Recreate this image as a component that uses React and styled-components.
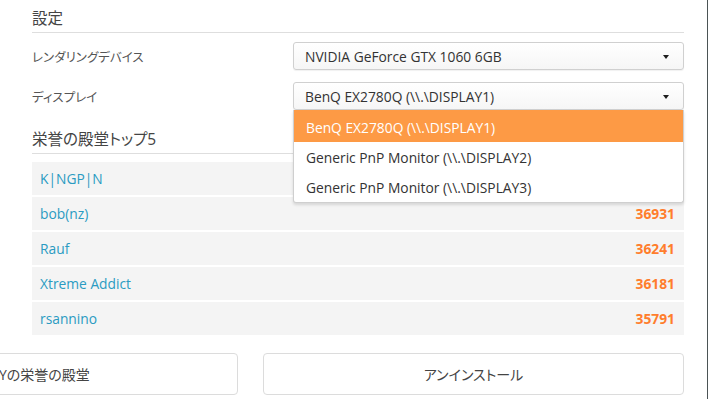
import React from "react";
import styled, { createGlobalStyle } from "styled-components";

const Global = createGlobalStyle`
  html, body { margin: 0; padding: 0; background: #fff; }
  body { font-family: "Open Sans", "Noto Sans CJK JP", sans-serif; overflow: hidden; }
  * { box-sizing: border-box; }
`;

const Page = styled.div`
  width: 708px;
  height: 399px;
  border-right: 1px solid #4b5355;
  overflow: hidden;
  background: #fff;
`;

const Content = styled.div`
  display: flex;
  flex-direction: column;
  padding: 0 23px 0 32px;
`;

const SectionTitle = styled.h2`
  margin: ${(p) => p.$top || 0}px 0 0;
  height: ${(p) => p.$h}px;
  display: flex;
  align-items: center;
  padding-top: 2px;
  border-bottom: 1px solid #dedede;
  font-size: 15.5px;
  font-weight: 400;
  color: #444;
  font-feature-settings: "palt";
`;

const FormRow = styled.div`
  display: grid;
  grid-template-columns: 261px 1fr;
  align-items: center;
  height: 28px;
  margin-top: ${(p) => p.$top}px;
`;

const Label = styled.span`
  font-size: 12.5px;
  color: #555;
  font-feature-settings: "palt";
`;

const SelectWrap = styled.div`
  position: relative;
  height: 28px;
`;

const Select = styled.div`
  height: 28px;
  display: flex;
  align-items: center;
  justify-content: space-between;
  padding: 0 14px 0 11px;
  border: 1px solid #d0d0d0;
  border-radius: 3px;
  background: linear-gradient(#ffffff, #f6f6f6);
  box-shadow: 0 1px 1px rgba(0, 0, 0, 0.06);
  font-size: 13.8px;
  color: #333;
`;

const Caret = styled.span`
  width: 0;
  height: 0;
  border-left: 3.5px solid transparent;
  border-right: 3.5px solid transparent;
  border-top: 4px solid #1e1e1e;
  margin-top: 2px;
`;

const Menu = styled.ul`
  position: absolute;
  left: 0;
  right: 0;
  top: 28px;
  margin: 0;
  padding: 0;
  list-style: none;
  background: #fff;
  border: 1px solid #cfcfcf;
  border-top: none;
  border-radius: 0 0 3px 3px;
  box-shadow: 0 2px 3px rgba(0, 0, 0, 0.12);
  z-index: 2;
`;

const MenuItem = styled.li`
  height: ${(p) => (p.$first ? 32 : 30)}px;
  padding: ${(p) => (p.$first ? "2px" : "0")} 11px 0 12px;
  display: flex;
  align-items: center;
  font-size: 13.8px;
  color: ${(p) => (p.$active ? "#fff" : "#333")};
  background: ${(p) => (p.$active ? "#fd9a45" : "transparent")};
`;

const Board = styled.div`
  display: grid;
  gap: 2px;
  margin-top: 8px;
`;

const Row = styled.div`
  height: 33px;
  display: flex;
  align-items: center;
  justify-content: space-between;
  padding: 0 9px 0 8px;
  background: #f4f4f4;
  font-size: 13.8px;
`;

const Name = styled.span`
  color: #2a9bc2;
`;

const Score = styled.span`
  color: #ff7d2c;
  font-weight: 700;
`;

const Bottom = styled.div`
  display: flex;
  gap: 25px;
  margin-top: 18px;
`;

const Button = styled.div`
  height: 42px;
  display: flex;
  align-items: center;
  justify-content: ${(p) => (p.$start ? "flex-start" : "center")};
  padding-left: ${(p) => (p.$start ? 6 : 0)}px;
  margin-left: ${(p) => p.$shift || 0}px;
  flex: ${(p) => (p.$w ? `0 0 ${p.$w}px` : "1")};
  border: 1px solid #dcdcdc;
  border-radius: 4px;
  background: #fff;
  font-size: 14px;
  color: #444;
  white-space: nowrap;
  font-feature-settings: "palt";
`;

const players = [
  ["K|NGP|N", ""],
  ["bob(nz)", "36931"],
  ["Rauf", "36241"],
  ["Xtreme Addict", "36181"],
  ["rsannino", "35791"],
];

const displays = [
  "BenQ EX2780Q (\\\\.\\DISPLAY1)",
  "Generic PnP Monitor (\\\\.\\DISPLAY2)",
  "Generic PnP Monitor (\\\\.\\DISPLAY3)",
];

export default function App() {
  return (
    <Page>
      <Global />
      <Content>
        <SectionTitle $h={33}>設定</SectionTitle>
        <FormRow $top={9}>
          <Label>レンダリングデバイス</Label>
          <SelectWrap>
            <Select>
              <span>NVIDIA GeForce GTX 1060 6GB</span>
              <Caret />
            </Select>
          </SelectWrap>
        </FormRow>
        <FormRow $top={12}>
          <Label>ディスプレイ</Label>
          <SelectWrap>
            <Select>
              <span>{displays[0]}</span>
              <Caret />
            </Select>
            <Menu>
              {displays.map((d, i) => (
                <MenuItem key={d} $first={i === 0} $active={i === 0}>
                  {d}
                </MenuItem>
              ))}
            </Menu>
          </SelectWrap>
        </FormRow>
        <SectionTitle $top={12} $h={32}>栄誉の殿堂トップ5</SectionTitle>
        <Board>
          {players.map(([n, s]) => (
            <Row key={n}>
              <Name>{n}</Name>
              <Score>{s}</Score>
            </Row>
          ))}
        </Board>
        <Bottom>
          <Button $w={246} $shift={-40} $start>
            Yの栄誉の殿堂
          </Button>
          <Button>アンインストール</Button>
        </Bottom>
      </Content>
    </Page>
  );
}
